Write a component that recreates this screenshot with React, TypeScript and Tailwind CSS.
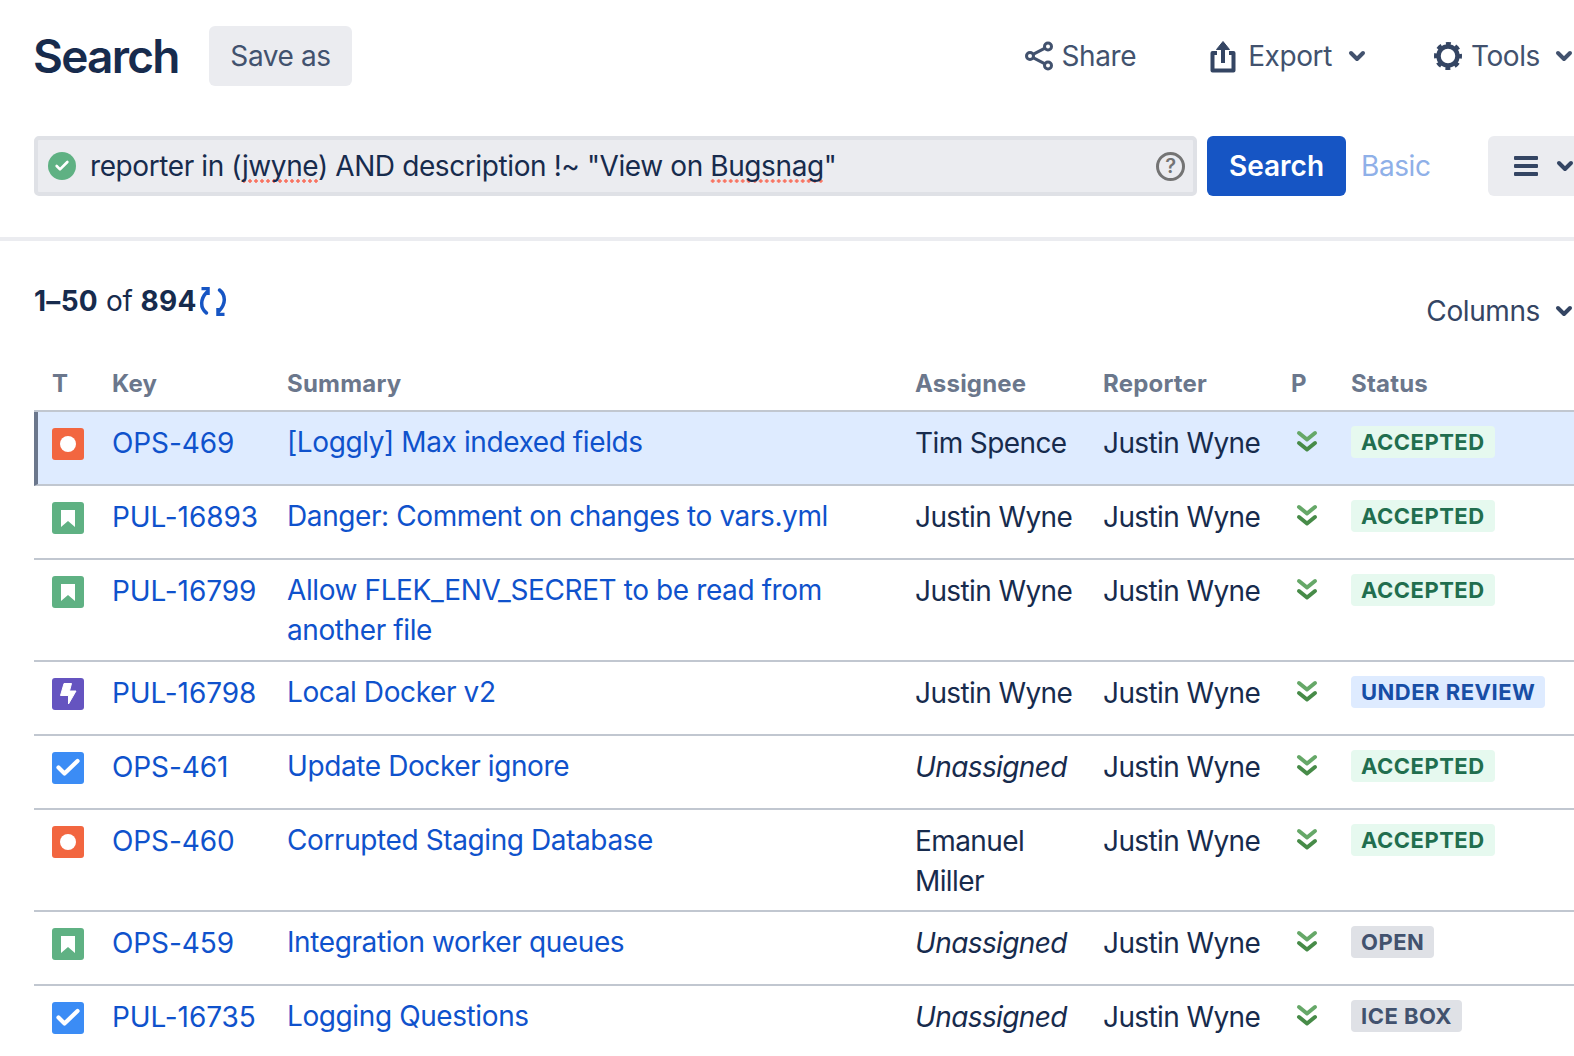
import { Check, ChevronDown } from "lucide-react";

type Issue = {
  type: "bug" | "story" | "epic" | "task";
  id: string;
  summary: string;
  assignee: string;
  status: string;
  height: string;
};

const issues: Issue[] = [
  { type: "bug", id: "OPS-469", summary: "[Loggly] Max indexed fields", assignee: "Tim Spence", status: "ACCEPTED", height: "h-[74px]" },
  { type: "story", id: "PUL-16893", summary: "Danger: Comment on changes to vars.yml", assignee: "Justin Wyne", status: "ACCEPTED", height: "h-[74px]" },
  { type: "story", id: "PUL-16799", summary: "Allow FLEK_ENV_SECRET to be read from another file", assignee: "Justin Wyne", status: "ACCEPTED", height: "h-[102px]" },
  { type: "epic", id: "PUL-16798", summary: "Local Docker v2", assignee: "Justin Wyne", status: "UNDER REVIEW", height: "h-[74px]" },
  { type: "task", id: "OPS-461", summary: "Update Docker ignore", assignee: "Unassigned", status: "ACCEPTED", height: "h-[74px]" },
  { type: "bug", id: "OPS-460", summary: "Corrupted Staging Database", assignee: "Emanuel Miller", status: "ACCEPTED", height: "h-[102px]" },
  { type: "story", id: "OPS-459", summary: "Integration worker queues", assignee: "Unassigned", status: "OPEN", height: "h-[74px]" },
  { type: "task", id: "PUL-16735", summary: "Logging Questions", assignee: "Unassigned", status: "ICE BOX", height: "h-[74px]" },
];

function TypeIcon({ type }: { type: Issue["type"] }) {
  if (type === "bug") {
    return (
      <div className="flex h-8 w-8 items-center justify-center rounded-[3px] bg-[#f26640]">
        <div className="h-4 w-4 rounded-full bg-white" />
      </div>
    );
  }
  if (type === "story") {
    return (
      <div className="flex h-8 w-8 items-center justify-center rounded-[3px] bg-[#5fb183]">
        <svg width="14" height="17" viewBox="0 0 14 17">
          <path d="M0 0h14v17L7 11 0 17z" fill="#fff" />
        </svg>
      </div>
    );
  }
  if (type === "epic") {
    return (
      <div className="h-8 w-8 rounded-[3px] bg-[#6554c0]">
        <svg width="32" height="32" viewBox="0 0 32 32">
          <path d="M12 5.500h7.500l-2 7.500h6.500l-7.500 13v-8.500H8.500z" fill="#fff" stroke="#fff" strokeWidth="1" strokeLinejoin="round" />
        </svg>
      </div>
    );
  }
  return (
    <div className="h-8 w-8 rounded-[3px] bg-[#3b8cf5]">
      <svg width="32" height="32" viewBox="0 0 32 32" fill="none">
        <path d="M6.500 15.500l6 6L25.500 9" stroke="#fff" strokeWidth="4.200" strokeLinecap="round" strokeLinejoin="round" />
      </svg>
    </div>
  );
}

function PriorityIcon() {
  return (
    <svg width="24" height="26" viewBox="0 0 24 26" fill="none" strokeWidth="4" strokeLinecap="round" strokeLinejoin="round">
      <path d="M4 4l8 6.500L20 4" stroke="#66a868" />
      <path d="M4 14l8 6.500L20 14" stroke="#478b48" />
    </svg>
  );
}

function StatusBadge({ status }: { status: string }) {
  let colors = "bg-[#e6f9ef] text-[#216e4e]";
  if (status === "UNDER REVIEW") colors = "bg-[#deebff] text-[#174ea6]";
  if (status === "OPEN" || status === "ICE BOX") colors = "bg-[#dfe1e6] text-[#42526e]";
  return (
    <span className={`inline-flex h-8 items-center rounded-[4px] px-[10px] text-[22px] font-bold tracking-[0.5px] ${colors}`}>
      {status}
    </span>
  );
}

function Row({ issue, selected }: { issue: Issue; selected: boolean }) {
  return (
    <div
      className={`flex border-b-2 border-[#c1c7d0] ${issue.height} ${
        selected ? "border-l-4 border-l-[#6b778c] bg-[#deebff]" : ""
      }`}
    >
      <div className={`shrink-0 pt-[16px] ${selected ? "w-[74px] pl-[14px]" : "w-[78px] pl-[18px]"}`}>
        <TypeIcon type={issue.type} />
      </div>
      <div className="w-[175px] shrink-0 pt-[11px] leading-[40px] tracking-[-0.1px] text-[#0f52cc]">{issue.id}</div>
      <div className="w-[628px] shrink-0 pt-[10px] pr-[60px] leading-[40px] text-[#0f52cc]">{issue.summary}</div>
      <div className={`w-[188px] shrink-0 pt-[11px] pr-[20px] leading-[40px] tracking-[-0.6px] ${issue.assignee === "Unassigned" ? "italic" : ""}`}>
        {issue.assignee}
      </div>
      <div className="w-[188px] shrink-0 pt-[11px] leading-[40px] tracking-[-0.6px]">Justin Wyne</div>
      <div className="w-[60px] shrink-0 pt-[17px] pl-[4px]">
        <PriorityIcon />
      </div>
      <div className="shrink-0 pt-[14px] leading-none">
        <StatusBadge status={issue.status} />
      </div>
    </div>
  );
}

const squiggle =
  "bg-[radial-gradient(circle,#f87462_1.5px,transparent_1.9px)] bg-[length:6px_4px] bg-bottom bg-repeat-x";

export default function App() {
  return (
    <div className="h-[1056px] w-[1574px] overflow-hidden bg-white font-['Inter',sans-serif] text-[28px] tracking-[-0.4px] text-[#172b4d]">
      <div className="flex h-[136px] items-start pt-[26px] pl-[34px]">
        <h1 className="ml-[-1px] w-[176px] text-[46px] leading-[60px] font-semibold tracking-[-1.75px] text-[#172b4d]">Search</h1>
        <button className="h-[60px] w-[143px] rounded-[6px] bg-[#ebecf0] text-[#42526e]">Save as</button>
        <div className="ml-auto flex h-[60px] items-center text-[#42526e]">
          <svg width="30" height="30" viewBox="0 0 30 30" fill="none" stroke="#42526e" strokeWidth="3">
            <circle cx="6" cy="15" r="3.500" />
            <circle cx="24" cy="5.500" r="3.500" />
            <circle cx="24" cy="24.500" r="3.500" />
            <path d="M9 13.400l12-6.300M9 16.600l12 6.300" />
          </svg>
          <span className="ml-[8px]">Share</span>
          <svg className="ml-[74px]" width="26" height="34" viewBox="0 0 26 34" fill="none" stroke="#344563" strokeWidth="4" strokeLinejoin="round">
            <path d="M7 14H2.500v17.500h21V14H19" />
            <path d="M13 24V4" />
            <path d="M6.500 10.500 13 2.500l6.500 8z" fill="#344563" strokeWidth="1" />
          </svg>
          <span className="ml-[12px]">Export</span>
          <ChevronDown className="ml-[13px]" size={24} strokeWidth={4} />
          <svg className="ml-[64px]" width="30" height="30" viewBox="0 0 30 30" fill="none" stroke="#344563">
            <circle cx="15" cy="15" r="9.500" strokeWidth="4.500" />
            <circle cx="15" cy="15" r="12.500" strokeWidth="3" strokeDasharray="5 4.820" strokeDashoffset="2.500" />
          </svg>
          <span className="ml-[8px]">Tools</span>
          <ChevronDown className="mr-[-2px] ml-[12px]" size={24} strokeWidth={4} />
        </div>
      </div>

      <div className="flex h-[60px] items-center pl-[34px]">
        <div className="flex h-[60px] w-[1163px] shrink-0 items-center rounded-[5px] border-4 border-[#dfe1e6] bg-[#ebecf0] pr-[8px] pl-[10px]">
          <div className="flex h-7 w-7 items-center justify-center rounded-full bg-[#5fb183]">
            <Check size={16} color="#fff" strokeWidth={4} />
          </div>
          <div className="ml-[14px] flex-1 whitespace-nowrap">
            reporter in (<span className={squiggle}>jwyne</span>) AND description !~ "View on{" "}
            <span className={squiggle}>Bugsnag</span>"
          </div>
          <div className="flex h-[29px] w-[29px] items-center justify-center rounded-full border-[3px] border-[#747474] text-[20px] font-semibold text-[#747474]">?</div>
        </div>
        <button className="ml-[10px] h-[60px] w-[139px] shrink-0 rounded-[6px] bg-[#1655c4] font-semibold tracking-normal text-white">Search</button>
        <span className="ml-[15px] shrink-0 text-[#8fb0e8]">Basic</span>
        <div className="ml-[57px] flex h-[60px] w-[100px] shrink-0 items-center rounded-[6px] bg-[#ebecf0] pl-[26px] text-[#344563]">
          <svg width="24" height="20" viewBox="0 0 24 20" fill="#344563">
            <rect width="24" height="4" rx="1" />
            <rect y="8" width="24" height="4" rx="1" />
            <rect y="16" width="24" height="4" rx="1" />
          </svg>
          <ChevronDown className="ml-[15px]" size={24} strokeWidth={4} />
        </div>
      </div>

      <div className="mt-[41px] h-1 bg-[#ebecf0]" />

      <div className="pl-[34px]">
        <div className="flex h-[121px] items-start justify-between pt-[40px]">
          <div className="flex items-center leading-[40px]">
            <span className="font-bold tracking-[0.3px]">1–50</span>
            <span className="ml-[8px]">of</span>
            <span className="ml-[8px] font-bold tracking-[0.3px]">894</span>
            <svg className="ml-[2px]" width="28" height="29" viewBox="0 0 28 29" fill="none" stroke="#1655c4" strokeWidth="3.500">
              <path d="M7.500 26C1 21 1 12 8 5" strokeLinecap="round" />
              <path d="M2.500 1.500H9V8" />
              <g transform="rotate(180 14 14.500)">
                <path d="M7.500 26C1 21 1 12 8 5" strokeLinecap="round" />
                <path d="M2.500 1.500H9V8" />
              </g>
            </svg>
          </div>
          <div className="flex items-center pt-[9px] text-[#344563]">
            <span>Columns</span>
            <ChevronDown className="mr-[-2px] ml-[12px]" size={24} strokeWidth={4} />
          </div>
        </div>
        <div className="flex h-[50px] items-start border-b-2 border-[#c1c7d0] pt-[4px] text-[24px] font-bold tracking-[0.2px] text-[#6b778c]">
          <div className="w-[78px] pl-[18px]">T</div>
          <div className="w-[175px]">Key</div>
          <div className="w-[628px]">Summary</div>
          <div className="w-[188px]">Assignee</div>
          <div className="w-[188px]">Reporter</div>
          <div className="w-[60px]">P</div>
          <div>Status</div>
        </div>
        {issues.map((issue, i) => (
          <Row key={issue.id} issue={issue} selected={i === 0} />
        ))}
      </div>
    </div>
  );
}
